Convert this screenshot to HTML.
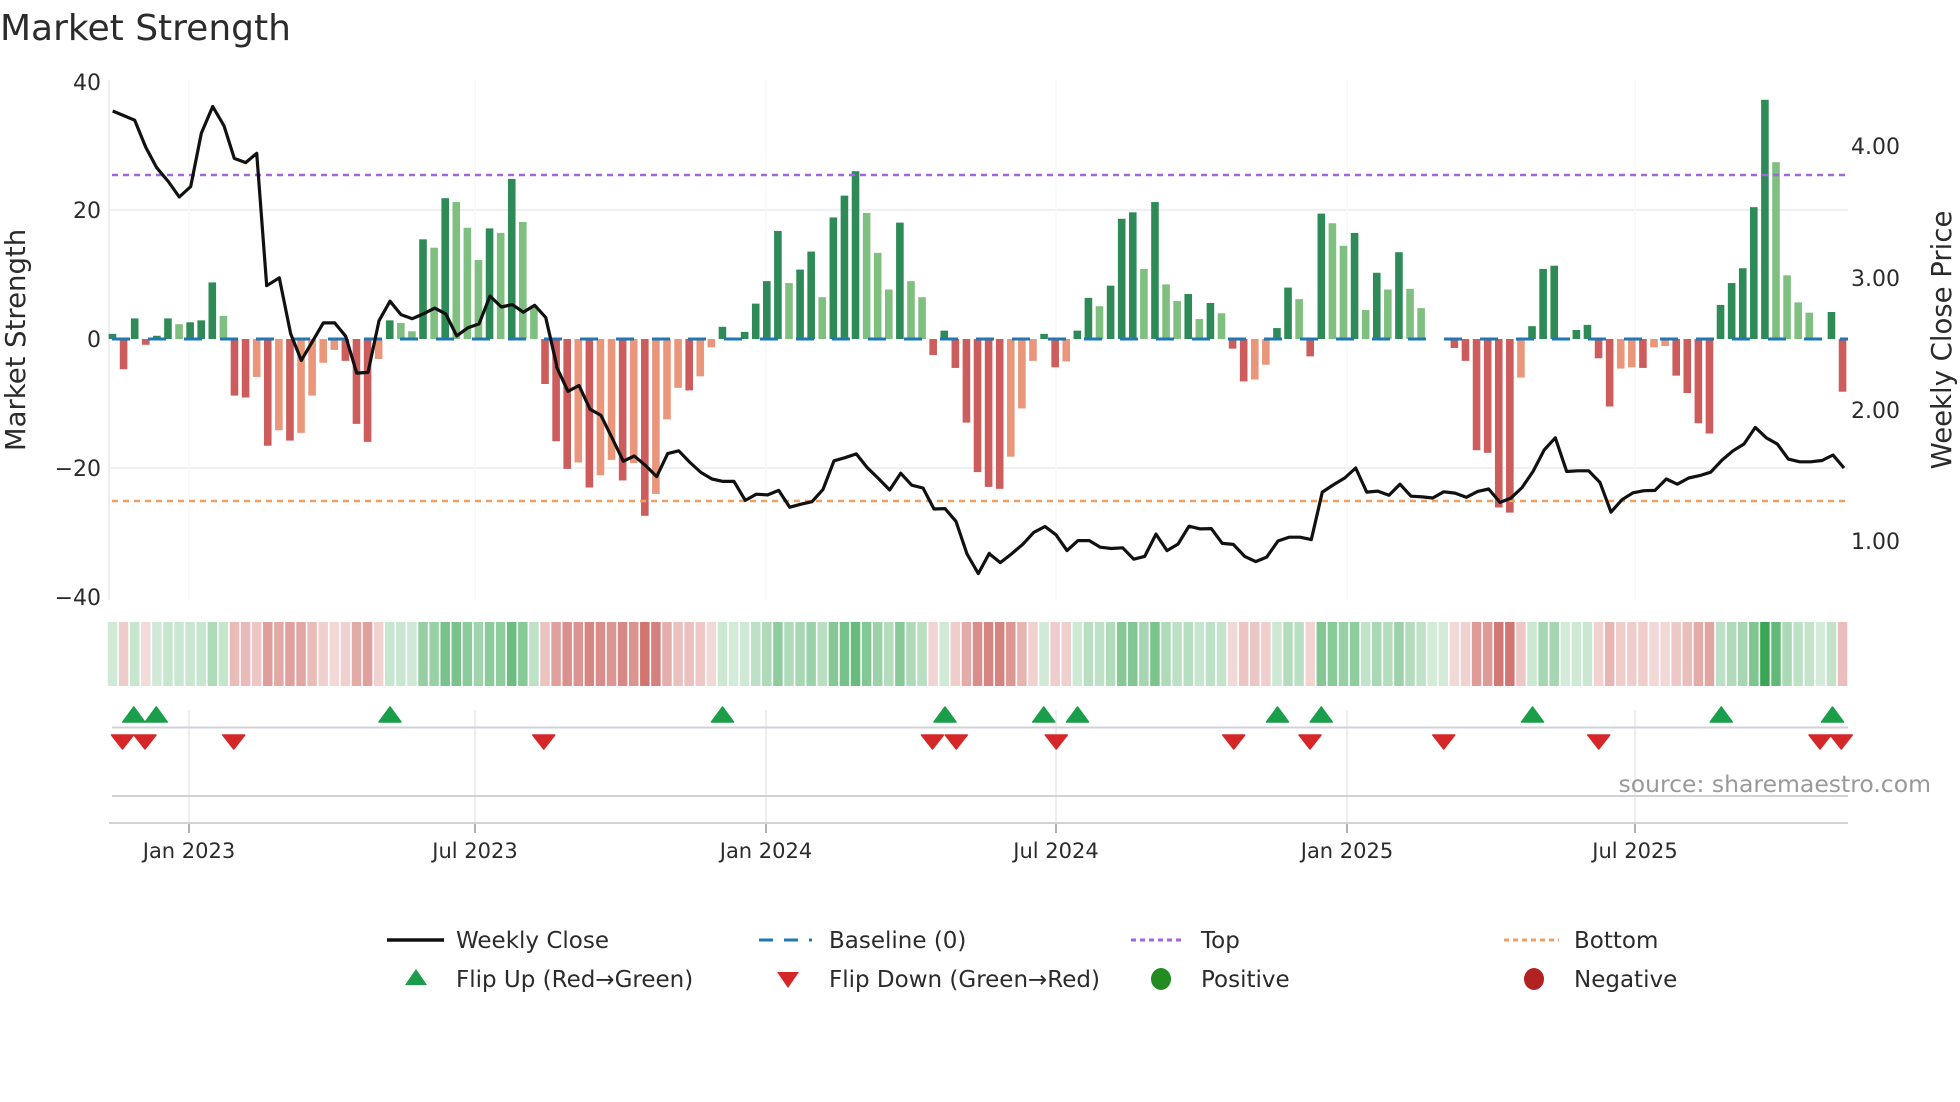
<!DOCTYPE html>
<html><head><meta charset="utf-8">
<style>
html,body{margin:0;padding:0;background:#fff;width:1960px;height:1102px;overflow:hidden}
svg{display:block;font-family:"DejaVu Sans","Liberation Sans",sans-serif}
</style></head>
<body>
<svg id="s" width="1960" height="1102" viewBox="0 0 1960 1102" xmlns="http://www.w3.org/2000/svg">
<rect width="1960" height="1102" fill="#fff"/>
<g id="grid"></g>
<g id="bars"></g>
<g id="lines"></g>
<g id="heat"></g>
<g id="flips"></g>
<text x="0" y="40" font-size="36" fill="#2b2b2b">Market Strength</text>
<g font-size="22" fill="#2b2b2b" text-anchor="end">
<text x="101" y="90">40</text>
<text x="101" y="218">20</text>
<text x="101" y="347">0</text>
<text x="101" y="476">−20</text>
<text x="101" y="605">−40</text>
</g>
<g font-size="22" fill="#2b2b2b">
<text x="1851" y="154">4.00</text>
<text x="1851" y="286">3.00</text>
<text x="1851" y="418">2.00</text>
<text x="1851" y="549">1.00</text>
</g>
<text transform="translate(25,340) rotate(-90)" font-size="27.5" fill="#2b2b2b" text-anchor="middle">Market Strength</text>
<text transform="translate(1951,340) rotate(-90)" font-size="27.5" fill="#2b2b2b" text-anchor="middle">Weekly Close Price</text>
<text x="1931" y="792" font-size="23.5" fill="#999" text-anchor="end">source: sharemaestro.com</text>
<g font-size="21" fill="#2b2b2b" text-anchor="middle">
<text x="189" y="858">Jan 2023</text>
<text x="475" y="858">Jul 2023</text>
<text x="766" y="858">Jan 2024</text>
<text x="1056" y="858">Jul 2024</text>
<text x="1347" y="858">Jan 2025</text>
<text x="1635" y="858">Jul 2025</text>
</g>
<g font-size="23" fill="#2b2b2b">
<line x1="387" y1="940" x2="444" y2="940" stroke="#111" stroke-width="3.5"/>
<text x="456" y="948">Weekly Close</text>
<line x1="759" y1="940" x2="812" y2="940" stroke="#1f77b4" stroke-width="3" stroke-dasharray="14,11"/>
<text x="829" y="948">Baseline (0)</text>
<line x1="1131" y1="940" x2="1185" y2="940" stroke="#a066e0" stroke-width="3" stroke-dasharray="5,4"/>
<text x="1201" y="948">Top</text>
<line x1="1504" y1="940" x2="1559" y2="940" stroke="#f0a060" stroke-width="3" stroke-dasharray="5,4"/>
<text x="1574" y="948">Bottom</text>
<polygon points="416,969 427,985 405,985" fill="#1a9e4a"/>
<text x="456" y="987">Flip Up (Red→Green)</text>
<polygon points="777,972 799,972 788,988" fill="#d62728"/>
<text x="829" y="987">Flip Down (Green→Red)</text>
<ellipse cx="1161" cy="979" rx="10" ry="11" fill="#228b22"/>
<text x="1201" y="987">Positive</text>
<ellipse cx="1534" cy="979" rx="10" ry="11" fill="#b22222"/>
<text x="1574" y="987">Negative</text>
</g>
</svg>
<script>
(function(){
var NS="http://www.w3.org/2000/svg";
function el(p,t,a){var e=document.createElementNS(NS,t);for(var k in a)e.setAttribute(k,a[k]);p.appendChild(e);return e;}
var G=document.getElementById('grid'),B=document.getElementById('bars'),L=document.getElementById('lines'),H=document.getElementById('heat'),F=document.getElementById('flips');
var V=[[0.8,'d'],[-4.7,'r'],[3.2,'d'],[-0.9,'r'],[0.5,'d'],[3.2,'d'],[2.3,'l'],[2.6,'d'],[2.9,'d'],[8.8,'d'],[3.6,'l'],[-8.8,'r'],[-9.1,'r'],[-5.9,'s'],[-16.6,'r'],[-14.2,'s'],[-15.8,'r'],[-14.6,'s'],[-8.8,'s'],[-3.7,'s'],[-1.7,'s'],[-3.4,'r'],[-13.2,'r'],[-16,'r'],[-3.1,'s'],[2.9,'d'],[2.5,'l'],[1.2,'l'],[15.5,'d'],[14.2,'l'],[21.9,'d'],[21.3,'l'],[17.3,'l'],[12.3,'l'],[17.2,'d'],[16.5,'l'],[24.9,'d'],[18.2,'l'],[5.2,'l'],[-7,'r'],[-15.9,'r'],
[-20.2,'r'],[-19.2,'s'],[-23.1,'r'],[-21.2,'s'],[-18.8,'s'],[-22,'r'],[-19.3,'s'],[-27.5,'r'],[-24.1,'s'],[-12.5,'s'],[-7.6,'s'],[-8,'r'],[-5.8,'s'],[-1.3,'s'],[1.9,'d'],[0,'d'],[1.1,'d'],[5.5,'d'],[9,'d'],[16.8,'d'],[8.7,'l'],[10.8,'d'],[13.6,'d'],[6.5,'l'],[18.9,'d'],[22.3,'d'],[26.1,'d'],[19.6,'l'],[13.4,'l'],[7.7,'l'],[18.1,'d'],[9,'l'],[6.5,'l'],[-2.5,'r'],[1.3,'d'],[-4.5,'r'],[-13,'r'],[-20.7,'r'],[-23,'r'],[-23.3,'r'],
[-18.3,'s'],[-10.8,'s'],[-3.4,'s'],[0.8,'d'],[-4.4,'r'],[-3.5,'s'],[1.3,'d'],[6.4,'d'],[5.1,'l'],[8.3,'d'],[18.7,'d'],[19.7,'d'],[10.9,'l'],[21.3,'d'],[8.5,'l'],[5.9,'l'],[7,'d'],[3.1,'l'],[5.6,'d'],[4,'l'],[-1.5,'r'],[-6.6,'r'],[-6.3,'s'],[-4,'s'],[1.7,'d'],[8,'d'],[6.2,'l'],[-2.7,'r'],[19.5,'d'],[18,'l'],[14.5,'l'],[16.5,'d'],[4.5,'l'],[10.3,'d'],[7.7,'l'],[13.5,'d'],[7.8,'l'],[4.8,'l'],
[0,'d'],[0,'r'],[-1.4,'r'],[-3.4,'r'],[-17.3,'r'],[-17.7,'r'],[-26.2,'r'],[-27,'r'],[-6,'s'],[2,'d'],[10.9,'d'],[11.4,'d'],[0,'d'],[1.4,'d'],[2.2,'d'],[-3,'r'],[-10.5,'r'],[-4.6,'s'],[-4.4,'s'],[-4.5,'r'],[-1.3,'s'],[-1.1,'s'],[-5.7,'r'],[-8.4,'r'],[-13.1,'r'],[-14.7,'r'],[5.3,'d'],[8.7,'d'],[11,'d'],[20.5,'d'],[37.2,'d'],[27.5,'l'],[9.9,'l'],[5.7,'l'],[4.1,'l'],[0,'l'],[4.2,'d'],[-8.2,'r']];
var X0=112.5,P=11.09,Z=339,U=6.43,BW=7.6;
var C={d:'#2e8b57',l:'#7fbf7f',r:'#cd5c5c',s:'#e9967a'};
[210,468].forEach(function(y){el(G,'line',{x1:109,x2:1848,y1:y,y2:y,stroke:'#eef0f4','stroke-width':2});});
el(G,'line',{x1:109,x2:109,y1:80,y2:600,stroke:'#eceef2','stroke-width':2});
[189,475,766,1056,1347,1635].forEach(function(x){
 el(G,'line',{x1:x,x2:x,y1:80,y2:600,stroke:'#f8f9fb','stroke-width':1.5});
 el(G,'line',{x1:x,x2:x,y1:710,y2:823,stroke:'#e8e9ee','stroke-width':1.5});
 el(G,'line',{x1:x,x2:x,y1:823,y2:833,stroke:'#999','stroke-width':1.5});
});
el(G,'line',{x1:112,x2:1848,y1:727.5,y2:727.5,stroke:'#d0d2d8','stroke-width':2});
el(G,'line',{x1:112,x2:1848,y1:796,y2:796,stroke:'#d0d2d8','stroke-width':2});
el(G,'line',{x1:109,x2:1848,y1:823,y2:823,stroke:'#d0d2d8','stroke-width':2});
V.forEach(function(v,i){
 var cx=X0+i*P,h=Math.abs(v[0])*U;
 if(h>0.2) el(B,'rect',{x:cx-BW/2,y:v[0]>0?Z-h:Z,width:BW,height:h,fill:C[v[1]]});
 var a=Math.min(1,Math.abs(v[0])/37);
 var col;
 if(v[0]>=0){col='rgba(58,166,85,'+(0.22+0.78*a).toFixed(3)+')';}
 else{col='rgba(200,90,85,'+(0.2+0.7*Math.min(1,Math.abs(v[0])/30)).toFixed(3)+')';}
 el(H,'rect',{x:cx-P/2+0.8,y:622,width:P-1.6,height:64,fill:col});
});
el(L,'line',{x1:112,x2:1848,y1:Z,y2:Z,stroke:'#1f77b4','stroke-width':3,'stroke-dasharray':'18,18'});
el(L,'line',{x1:112,x2:1848,y1:175,y2:175,stroke:'#a066e0','stroke-width':2.5,'stroke-dasharray':'6,5'});
el(L,'line',{x1:112,x2:1848,y1:501,y2:501,stroke:'#f0a060','stroke-width':2.5,'stroke-dasharray':'6,5'});
var segs=[[100,[38,90,104,117,137,195,170,255,205,295,238,340,272,310,304,155,338,77,372,133,403,228,437,240,470,213,500,598,538,575,572,738,604,815,670,706,704,706,737,745,770,852,804,850,837,700,870,643,903,682,937,694,970,680,1004,663,1037,680,1070,744,1104,720,1137,709,1170,628,1204,660,1237,653,1270,675,1304,655,1337,690,1370,830]],
[540,[50,835,84,905,117,888,150,957,183,975,216,1040,250,1108,283,1093,316,1120,350,1153,383,1086,416,1078,450,1112,483,1141,516,1160,549,1167,582,1167,616,1222,649,1204,683,1206,716,1193,749,1242,783,1233,816,1226,849,1190,882,1107,915,1098,949,1087,982,1127,1015,1158,1049,1192,1082,1143,1115,1178,1149,1186,1182,1247,1215,1246,1248,1283,1281,1378,1315,1435,1348,1376]],
[980,[28,1377,61,1403,95,1377,128,1350,161,1315,195,1298,228,1322,261,1368,294,1339,328,1339,361,1358,394,1362,428,1360,461,1393,494,1385,528,1320,561,1368,594,1349,627,1297,661,1305,694,1304,727,1347,760,1350,794,1385,827,1400,860,1387,894,1340,927,1329,960,1329,994,1336,1027,1198,1060,1177,1094,1157,1127,1128,1160,1198,1193,1195,1227,1207,1260,1175,1293,1210,1327,1212]],
[1420,[38,1215,71,1197,105,1201,139,1213,173,1196,206,1189,240,1228,272,1216,306,1185,339,1138,373,1075,406,1040,440,1138,473,1136,506,1136,540,1170,573,1256,606,1220,639,1200,672,1194,705,1193,739,1160,772,1175,806,1157,839,1150,872,1140,906,1105,939,1078,972,1058,1006,1010,1039,1040,1072,1058,1105,1102,1139,1110,1172,1110,1206,1106,1239,1090,1272,1128]]];
var pts=[];
segs.forEach(function(s){for(var k=0;k<s[1].length;k+=2){pts.push((s[0]+s[1][k]/3).toFixed(1)+','+(80+s[1][k+1]*0.344).toFixed(1));}});
el(L,'polyline',{points:pts.join(' '),fill:'none',stroke:'#111','stroke-width':3.2,'stroke-linejoin':'round'});
[107,125,312,578,756,835,862,1022,1057,1226,1377,1466].forEach(function(x){x*=1.25;el(F,'polygon',{points:(x)+',707 '+(x+11)+',722 '+(x-11)+',722',fill:'#1a9e4a','stroke':'#1a9e4a','stroke-width':1.5,'stroke-linejoin':'round'});});
[98,116,187,435,746,765,845,987,1048,1155,1279,1456,1473].forEach(function(x){x*=1.25;el(F,'polygon',{points:(x-11)+',735 '+(x+11)+',735 '+x+',749',fill:'#d62728','stroke':'#d62728','stroke-width':1.5,'stroke-linejoin':'round'});});
})();
</script>
</body></html>
